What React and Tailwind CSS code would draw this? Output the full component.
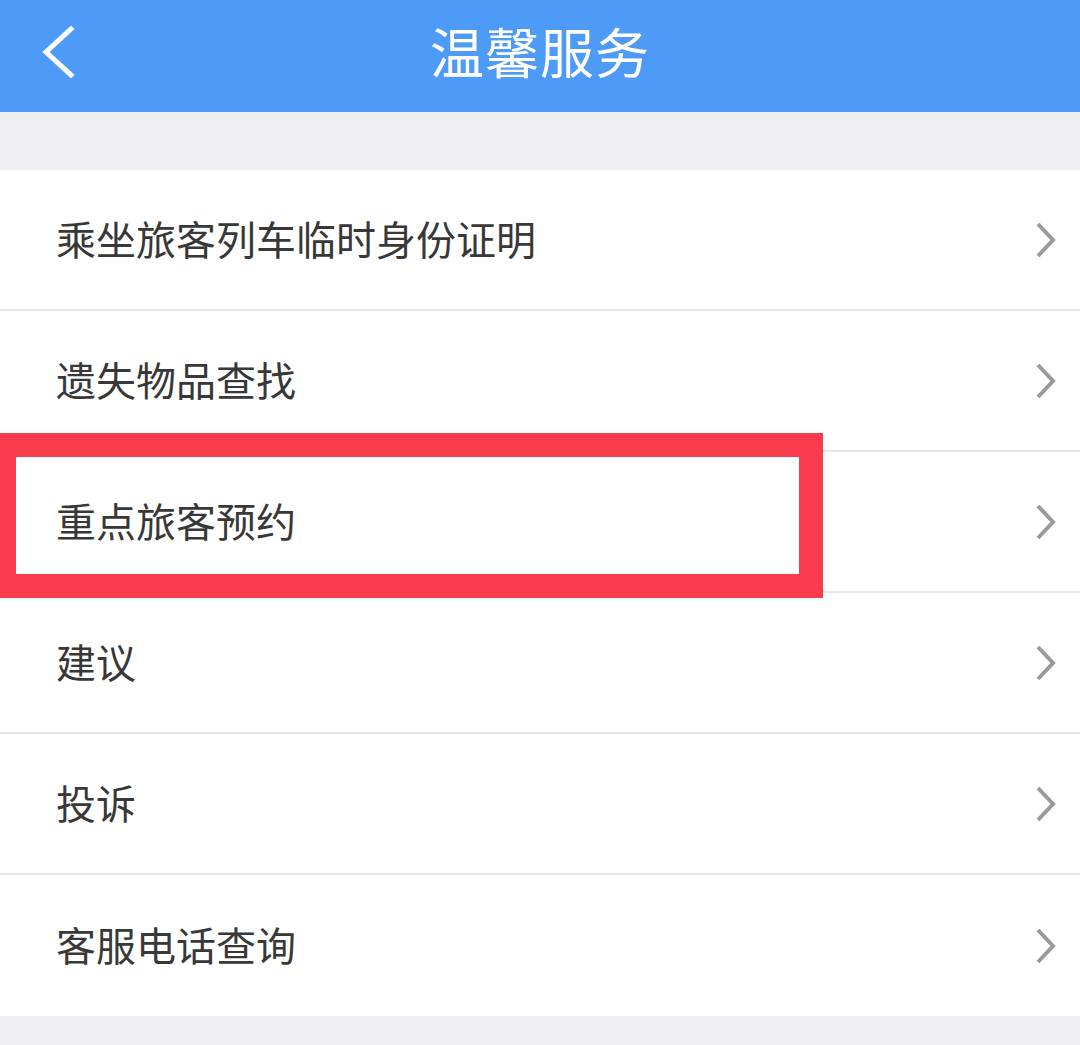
import React from 'react'

const ITEMS = [
  '乘坐旅客列车临时身份证明',
  '遗失物品查找',
  '重点旅客预约',
  '建议',
  '投诉',
  '客服电话查询'
]

export default function App() {
  return (
    <div
      className="relative min-h-[1045px] w-[1080px] bg-[#efeef3]"
      style={{ fontFamily: '"Noto Sans CJK SC", "Noto Sans", sans-serif' }}
    >
      <header className="relative flex h-[112px] items-center justify-center bg-[#4e9bf7]">
        <svg
          className="absolute left-[40px] top-[26px]"
          width="36"
          height="52"
          viewBox="0 0 36 52"
          fill="none"
        >
          <path
            d="M31 3 L6 26 L31 49"
            stroke="#fff"
            strokeWidth="5"
            strokeLinecap="square"
          />
        </svg>
        <h1 className="-mt-[10px] text-[54px] font-normal leading-none tracking-[1px] text-white">
          温馨服务
        </h1>
      </header>

      <div className="h-[58px]" />

      <ul className="bg-white">
        {ITEMS.map((label, i) => (
          <li
            key={label}
            className={`flex h-[141px] items-center justify-between pl-[56px] pr-[22px] ${
              i < ITEMS.length - 1 ? 'border-b-2 border-[#e6e6e9]' : ''
            }`}
          >
            <span className="-mt-[4px] text-[40px] leading-none text-[#383838]">
              {label}
            </span>
            <svg width="24" height="40" viewBox="0 0 24 40" fill="none">
              <path
                d="M4 4 L19 20 L4 36"
                stroke="#9a9a9a"
                strokeWidth="4"
              />
            </svg>
          </li>
        ))}
      </ul>

      <div className="absolute left-[-8px] top-[433px] h-[165px] w-[831px] border-[24px] border-[#fa3d4c]" />
    </div>
  )
}
